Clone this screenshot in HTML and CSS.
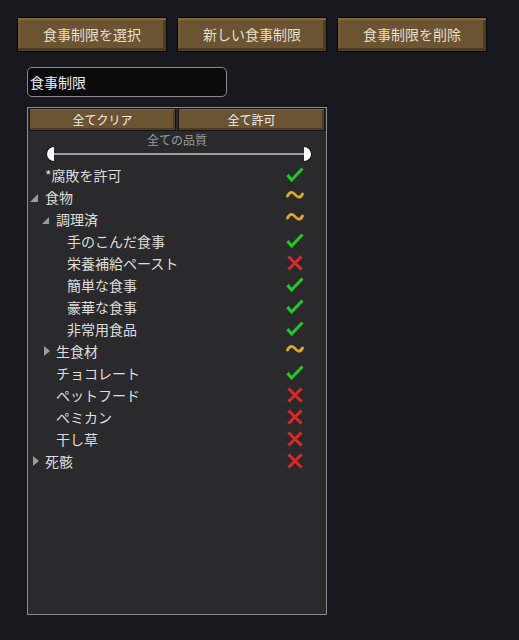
FILE: index.html
```html
<!DOCTYPE html>
<html lang="ja">
<head>
<meta charset="utf-8">
<link rel="stylesheet" href="styles.css">
</head>
<body>
<div class="top">
  <div class="btn">食事制限を選択</div>
  <div class="btn">新しい食事制限</div>
  <div class="btn">食事制限を削除</div>
</div>
<div class="field">食事制限</div>
<div class="panel">
  <div class="inner-btns">
    <div class="ibtn">全てクリア</div>
    <div class="ibtn">全て許可</div>
  </div>
  <div class="quality">全ての品質</div>
  <div class="slider">
    <span class="handle left"></span>
    <span class="track"></span>
    <span class="handle right"></span>
  </div>
  <div class="rows">
    <div class="row l0"><span class="tog"></span><span class="label">*腐敗を許可</span><svg class="ic" viewBox="0 0 18 16"><polyline class="chk" points="1.5,8 5.5,13 16.5,1.5"/></svg></div>
    <div class="row l0"><span class="tog"><svg viewBox="0 0 17 22"><polygon class="tri" points="2,16 10,16 10,8"/></svg></span><span class="label">食物</span><svg class="ic" viewBox="0 0 18 16"><path class="tld" d="M1.5,7 C4,2 7,3 9,5.5 S14,10 16.5,5"/></svg></div>
    <div class="row l1"><span class="tog"><svg viewBox="0 0 17 22"><polygon class="tri" points="3,16 10,16 10,9"/></svg></span><span class="label">調理済</span><svg class="ic" viewBox="0 0 18 16"><path class="tld" d="M1.5,7 C4,2 7,3 9,5.5 S14,10 16.5,5"/></svg></div>
    <div class="row l2"><span class="tog"></span><span class="label">手のこんだ食事</span><svg class="ic" viewBox="0 0 18 16"><polyline class="chk" points="1.5,8 5.5,13 16.5,1.5"/></svg></div>
    <div class="row l2"><span class="tog"></span><span class="label">栄養補給ペースト</span><svg class="ic" viewBox="0 0 18 16"><path class="crs" d="M2.5,1.5 L15.5,14.5 M15.5,1.5 L2.5,14.5"/></svg></div>
    <div class="row l2"><span class="tog"></span><span class="label">簡単な食事</span><svg class="ic" viewBox="0 0 18 16"><polyline class="chk" points="1.5,8 5.5,13 16.5,1.5"/></svg></div>
    <div class="row l2"><span class="tog"></span><span class="label">豪華な食事</span><svg class="ic" viewBox="0 0 18 16"><polyline class="chk" points="1.5,8 5.5,13 16.5,1.5"/></svg></div>
    <div class="row l2"><span class="tog"></span><span class="label">非常用食品</span><svg class="ic" viewBox="0 0 18 16"><polyline class="chk" points="1.5,8 5.5,13 16.5,1.5"/></svg></div>
    <div class="row l1"><span class="tog"><svg viewBox="0 0 17 22"><polygon class="tri" points="5,6 11,11 5,16"/></svg></span><span class="label">生食材</span><svg class="ic" viewBox="0 0 18 16"><path class="tld" d="M1.5,7 C4,2 7,3 9,5.5 S14,10 16.5,5"/></svg></div>
    <div class="row l1"><span class="tog"></span><span class="label">チョコレート</span><svg class="ic" viewBox="0 0 18 16"><polyline class="chk" points="1.5,8 5.5,13 16.5,1.5"/></svg></div>
    <div class="row l1"><span class="tog"></span><span class="label">ペットフード</span><svg class="ic" viewBox="0 0 18 16"><path class="crs" d="M2.5,1.5 L15.5,14.5 M15.5,1.5 L2.5,14.5"/></svg></div>
    <div class="row l1"><span class="tog"></span><span class="label">ペミカン</span><svg class="ic" viewBox="0 0 18 16"><path class="crs" d="M2.5,1.5 L15.5,14.5 M15.5,1.5 L2.5,14.5"/></svg></div>
    <div class="row l1"><span class="tog"></span><span class="label">干し草</span><svg class="ic" viewBox="0 0 18 16"><path class="crs" d="M2.5,1.5 L15.5,14.5 M15.5,1.5 L2.5,14.5"/></svg></div>
    <div class="row l0"><span class="tog"><svg viewBox="0 0 17 22"><polygon class="tri" points="5,6 11,11 5,16"/></svg></span><span class="label">死骸</span><svg class="ic" viewBox="0 0 18 16"><path class="crs" d="M2.5,1.5 L15.5,14.5 M15.5,1.5 L2.5,14.5"/></svg></div>
  </div>
</div>
</body>
</html>
```
FILE: styles.css
```css
* { box-sizing: border-box; }
html, body { margin: 0; padding: 0; }
body {
  background: #17191e;
  font-family: "Noto Sans CJK JP", "Noto Sans", sans-serif;
  color: #e4e4e4;
  width: 519px;
  height: 640px;
  overflow: hidden;
}
.top {
  display: flex;
  gap: 10px;
  padding: 17px 0 0 17px;
}
.btn {
  width: 150px;
  height: 35px;
  border: 1px solid #050505;
  background: #6b5431;
  box-shadow: inset 0 2px 0 #7e6639, inset -3px -3px 0 #4e3d22, inset 2px 0 0 #735b34;
  color: #e6dfd2;
  font-size: 14px;
  display: flex;
  align-items: center;
  justify-content: center;
  padding-bottom: 2px;
}
.field {
  margin: 15px 0 0 27px;
  width: 200px;
  height: 30px;
  border: 1px solid #8a8a8a;
  border-radius: 5px;
  background: #0b0b0c;
  font-size: 14px;
  color: #ececec;
  padding-left: 2px;
  display: flex;
  align-items: center;
}
.panel {
  margin: 10px 0 0 27px;
  width: 300px;
  height: 508px;
  border: 1px solid #8c8c8c;
  background: #2a2a2c;
}
.inner-btns {
  display: flex;
  gap: 2px;
  padding: 0 0 0 1px;
}
.ibtn {
  width: 147px;
  height: 23px;
  background: #6b5431;
  border: 1px solid #141414;
  box-shadow: inset 0 1px 0 #7e6639, inset -2px -2px 0 #4e3d22;
  color: #f0f0f0;
  font-size: 12px;
  display: flex;
  align-items: center;
  justify-content: center;
}
.quality {
  height: 15px;
  line-height: 15px;
  padding-top: 1px;
  font-size: 12px;
  color: #9a9a9a;
  text-align: center;
}
.slider {
  height: 16px;
  display: flex;
  align-items: center;
  padding: 0 14px 0 18px;
}
.track {
  flex: 1;
  height: 2px;
  background: #a0a0a0;
}
.handle {
  width: 8px;
  height: 16px;
  background: #ffffff;
  border: 1px solid #111;
}
.handle.left {
  border-radius: 8px 0 0 8px;
  border-right: none;
}
.handle.right {
  border-radius: 0 8px 8px 0;
  border-left: none;
}
.rows {
  margin-top: 2px;
}
.row {
  height: 22px;
  display: flex;
  align-items: center;
  padding-right: 22px;
  font-size: 14px;
}
.row.l0 { padding-left: 0; }
.row.l1 { padding-left: 11px; }
.row.l2 { padding-left: 22px; }
.tog {
  width: 17px;
  height: 22px;
  flex: none;
}
.tog svg { width: 17px; height: 22px; display: block; }
.tri { fill: #9a9a9a; }
.label {
  flex: 1;
  white-space: nowrap;
  color: #dedede;
}
.ic {
  width: 18px;
  height: 16px;
  flex: none;
}
.chk { fill: none; stroke: #22c928; stroke-width: 3; stroke-linecap: butt; stroke-linejoin: miter; }
.tld { fill: none; stroke: #e0a82a; stroke-width: 2.8; stroke-linecap: round; }
.crs { fill: none; stroke: #e02626; stroke-width: 3; }
```
